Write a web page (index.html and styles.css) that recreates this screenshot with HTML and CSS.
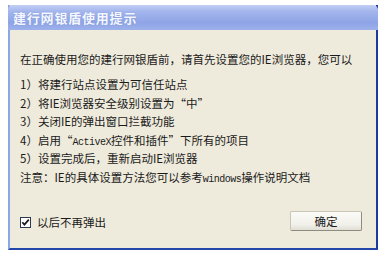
FILE: index.html
```html
<!DOCTYPE html>
<html lang="zh-CN">
<head>
<meta charset="utf-8">
<link rel="stylesheet" href="styles.css">
</head>
<body>
<div class="window">
  <div class="titlebar">建行网银盾使用提示</div>
  <div class="content">
    <p class="intro">在正确使用您的建行网银盾前，请首先设置您的IE浏览器，您可以</p>
    <ul class="steps">
      <li>1）将建行站点设置为可信任站点</li>
      <li>2）将IE浏览器安全级别设置为“中”</li>
      <li>3）关闭IE的弹出窗口拦截功能</li>
      <li>4）启用“<span class="mono">ActiveX</span>控件和插件”下所有的项目</li>
      <li>5）设置完成后，重新启动IE浏览器</li>
      <li>注意：IE的具体设置方法您可以参考<span class="mono">windows</span>操作说明文档</li>
    </ul>
    <div class="footer">
      <label class="check"><span class="box"><svg width="9" height="9" viewBox="0 0 9 9"><path d="M1.3 4.2 L3.4 6.6 L7.8 1.6" fill="none" stroke="#1a1a1a" stroke-width="1.7"/></svg></span>以后不再弹出</label>
      <button class="ok">确定</button>
    </div>
  </div>
</div>
</body>
</html>
```
FILE: styles.css
```css
html, body {
  margin: 0;
  padding: 0;
  background: #ffffff;
}
body {
  font-family: "Noto Sans CJK SC", "DejaVu Sans", sans-serif;
  font-size: 11.5px;
  color: #1a1a1a;
}
.window {
  margin: 5px 0 0 8px;
  width: 370px;
  height: 245px;
  display: flex;
  flex-direction: column;
  box-sizing: border-box;
  border-left: 2px solid #8fa6e6;
  border-right: 2px solid #1d3a9c;
  border-bottom: 2px solid #2446a8;
  background: #efebdc;
}
.titlebar {
  height: 25px;
  line-height: 25px;
  padding-left: 5px;
  margin-left: -2px;
  margin-right: -2px;
  background: linear-gradient(180deg, #c2cff3 0%, #a4b6ed 25%, #8ea4e6 70%, #9db1ea 100%);
  border-radius: 5px 5px 0 0;
  color: #f4f7ff;
  font-weight: bold;
  font-size: 13px;
  letter-spacing: 0.8px;
  text-shadow: 0 0 1px #6f86cf;
}
.content {
  flex: 1;
  display: flex;
  flex-direction: column;
  padding: 20px 10px 0 10px;
}
.intro {
  margin: 0;
  height: 18px;
  line-height: 18px;
}
.steps {
  list-style: none;
  margin: 7px 0 0 0;
  padding: 0;
}
.steps li {
  height: 18.6px;
  line-height: 18.6px;
  white-space: nowrap;
}
.mono {
  font-family: "Liberation Mono", monospace;
  font-size: 10px;
  line-height: 1;
  letter-spacing: -0.5px;
}
.footer {
  margin-top: 24px;
  display: flex;
  align-items: center;
  justify-content: space-between;
}
.check {
  display: flex;
  align-items: center;
  gap: 6px;
  margin-top: 3px;
}
.box {
  width: 9px;
  height: 9px;
  border: 1px solid #2a3b52;
  background: #fff;
  display: flex;
  align-items: center;
  justify-content: center;
}
.ok {
  width: 72px;
  height: 20px;
  margin-right: 4px;
  padding: 0;
  font-family: inherit;
  font-size: 11.5px;
  color: #1a1a1a;
  background: linear-gradient(180deg, #fbfbf8 0%, #f1f0ea 70%, #e0ded4 100%);
  border: 1px solid #c9c6b8;
  border-right-color: #8e8b80;
  border-bottom-color: #8e8b80;
  border-radius: 2px;
}
```
